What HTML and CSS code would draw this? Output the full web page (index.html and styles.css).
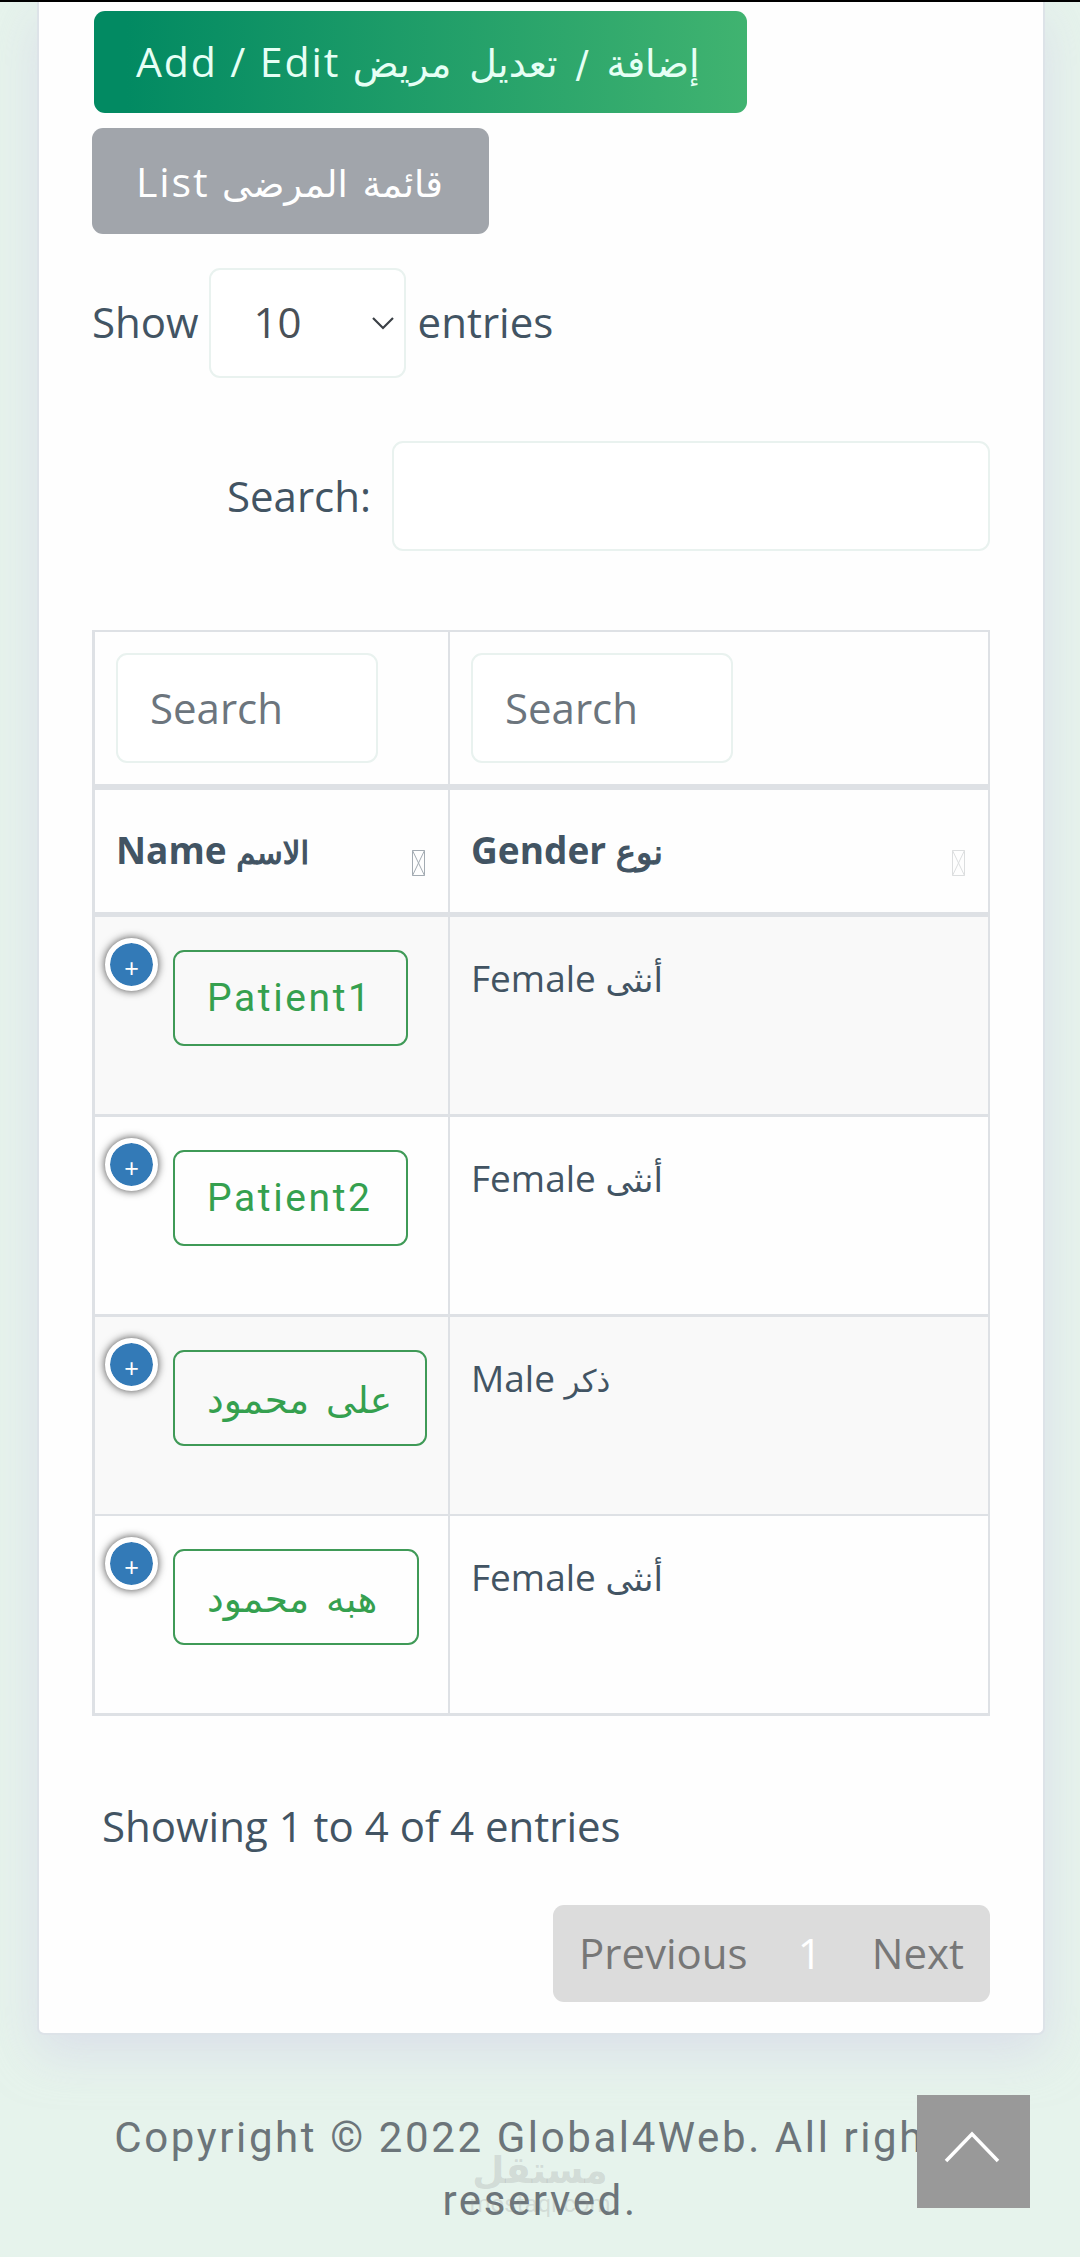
FILE: index.html
```html
<!DOCTYPE html>
<html lang="en">
<head>
    <meta charset="UTF-8">
    <meta name="viewport" content="width=device-width, initial-scale=1.0">
    <title>Patients - Global4Web</title>
    <link rel="stylesheet" href="styles.css">
</head>
<body>
    <div class="card">
        <div class="tabs">
            <button type="button" class="btn btn-primary">Add / Edit <span class="ar ar-add" dir="rtl">إضافة / تعديل مريض</span></button>
            <button type="button" class="btn btn-secondary">List <span class="ar ar-list" dir="rtl">قائمة المرضى</span></button>
        </div>

        <div class="table-length">
            <label for="length">Show</label>
            <div class="select-wrap">
                <select id="length" name="length">
                    <option>10</option>
                    <option>25</option>
                    <option>50</option>
                </select>
                <svg class="select-arrow" viewBox="0 0 24 14"><path d="M2 2l10 10L22 2"/></svg>
            </div>
            <span>entries</span>
        </div>

        <div class="table-filter">
            <label for="search">Search:</label>
            <input type="text" id="search" name="search">
        </div>

        <table class="patients">
            <colgroup>
                <col class="col-name">
                <col>
            </colgroup>
            <thead>
                <tr class="filters">
                    <th><input type="text" placeholder="Search"></th>
                    <th><input type="text" placeholder="Search"></th>
                </tr>
                <tr class="titles">
                    <th>
                        <div class="title">
                            <span>Name <span class="ar ar-name" dir="rtl">الاسم</span></span>
                            <svg class="sort sort-active" viewBox="0 0 13 26"><path d="M.5.5h12v25H.5zM.5.5l12 25M12.5.5l-12 25"/></svg>
                        </div>
                    </th>
                    <th>
                        <div class="title">
                            <span>Gender <span class="ar ar-gender" dir="rtl">نوع</span></span>
                            <svg class="sort" viewBox="0 0 13 26"><path d="M.5.5h12v25H.5zM.5.5l12 25M12.5.5l-12 25"/></svg>
                        </div>
                    </th>
                </tr>
            </thead>
            <tbody>
                <tr>
                    <td class="name"><div class="name-cell"><span class="expand">+</span><button type="button" class="btn-outline">Patient1</button></div></td>
                    <td class="gender">Female <span class="ar ar-female" dir="rtl">أنثى</span></td>
                </tr>
                <tr>
                    <td class="name"><div class="name-cell"><span class="expand">+</span><button type="button" class="btn-outline">Patient2</button></div></td>
                    <td class="gender">Female <span class="ar ar-female" dir="rtl">أنثى</span></td>
                </tr>
                <tr class="thin">
                    <td class="name"><div class="name-cell"><span class="expand">+</span><button type="button" class="btn-outline btn-ali"><span class="ar ar-patient" dir="rtl">على محمود</span></button></div></td>
                    <td class="gender">Male <span class="ar ar-male" dir="rtl">ذكر</span></td>
                </tr>
                <tr>
                    <td class="name"><div class="name-cell"><span class="expand">+</span><button type="button" class="btn-outline btn-heba"><span class="ar ar-patient" dir="rtl">هبه محمود</span></button></div></td>
                    <td class="gender">Female <span class="ar ar-female" dir="rtl">أنثى</span></td>
                </tr>
            </tbody>
        </table>

        <div class="table-info">Showing 1 to 4 of 4 entries</div>

        <div class="pagination">
            <a class="previous">Previous</a>
            <a class="current">1</a>
            <a class="next">Next</a>
        </div>
    </div>

    <footer class="footer">
        <p>Copyright © 2022 Global4Web. All rights reserved.</p>
        <div class="watermark">
            <span class="watermark-logo" dir="rtl">مستقل</span>
            <span class="watermark-url">mostaql.com</span>
        </div>
    </footer>

    <a class="back-to-top">
        <svg viewBox="0 0 56 32"><path d="M2 30L28 3l26 27"/></svg>
    </a>
</body>
</html>
```

FILE: styles.css
```css
*, *::before, *::after {
    box-sizing: border-box;
}

body {
    position: relative;
    margin: 0;
    height: 2257px;
    overflow: hidden;
    border-top: 2px solid #000;
    background-color: #e6f3ec;
    color: #425463;
    font-family: 'Open Sans', 'DejaVu Sans', sans-serif;
    font-size: 42px;
    line-height: 58px;
}

button, input, select {
    font: inherit;
    letter-spacing: inherit;
}

.ar {
    display: inline-block;
    font-family: 'DejaVu Sans', sans-serif;
    line-height: 1;
    white-space: nowrap;
}

.card {
    width: 1008px;
    height: 2033px;
    margin: 0 0 0 37px;
    padding: 9px 53px 0;
    background-color: #fefefe;
    border: 2px solid #dde3e8;
    border-top: 0;
    border-radius: 0 0 7px 7px;
    box-shadow: 0 18px 48px rgba(210, 208, 232, 0.55);
}

.tabs {
    display: flex;
    flex-direction: column;
    align-items: flex-start;
    gap: 15px;
}

.btn {
    border: 0;
    border-radius: 11px;
    color: #fff;
    font-size: 41px;
    letter-spacing: 1.9px;
    text-align: left;
    white-space: nowrap;
}

.btn-primary {
    width: 653px;
    height: 102px;
    margin-left: 2px;
    padding: 0 0 3px 42px;
    background: linear-gradient(90deg, #028a62 5%, #40b370);
    color: #e6fff5;
}

.btn-secondary {
    width: 397px;
    height: 106px;
    padding: 0 0 1px 44px;
    background-color: #a1a5ab;
}

.ar-add {
    font-size: 38px;
    word-spacing: 6px;
}

.ar-list {
    font-size: 37px;
    word-spacing: 3px;
}

.table-length {
    display: flex;
    align-items: center;
    margin-top: 34px;
}

.table-length label,
.table-length > span {
    padding-bottom: 2px;
}

.select-wrap {
    position: relative;
    margin: 0 12px 0 10px;
}

.select-wrap select {
    display: block;
    width: 197px;
    height: 110px;
    padding: 0 0 2px 43px;
    appearance: none;
    background-color: #fff;
    border: 2px solid #e9f2ef;
    border-radius: 11px;
    color: #495057;
}

.select-arrow {
    position: absolute;
    top: 48px;
    right: 11px;
    width: 24px;
    height: 14px;
    fill: none;
    stroke: #3b4046;
    stroke-width: 2.2;
}

.table-filter {
    display: flex;
    justify-content: flex-end;
    align-items: center;
    gap: 21px;
    margin-top: 63px;
}

input {
    height: 110px;
    background-color: #fff;
    border: 2px solid #e9f2ef;
    border-radius: 11px;
}

.table-filter input {
    width: 598px;
}

.patients {
    width: 898px;
    margin-top: 79px;
    table-layout: fixed;
    border-collapse: separate;
    border-spacing: 0;
    border: 0 solid #dee1e5;
    border-width: 2px 0 0 3px;
    font-size: 37px;
}

.col-name {
    width: 355px;
}

.patients th,
.patients td {
    padding: 0 21px;
    border: 0 solid #dee1e5;
    border-right-width: 2px;
    text-align: left;
    vertical-align: top;
}

.filters th {
    height: 158px;
    padding-top: 21px;
    border-bottom-width: 6px;
    font-weight: 400;
    line-height: 0;
}

.filters input {
    width: 262px;
    padding: 0 32px 2px;
    font-size: 42px;
    line-height: 58px;
}

.filters input::placeholder {
    color: #6c757d;
    opacity: 1;
}

.titles th {
    height: 127px;
    padding-top: 31px;
    border-bottom-width: 5px;
}

.title {
    display: flex;
    justify-content: space-between;
}

.sort {
    width: 13px;
    height: 26px;
    margin: 29px 2px 0 0;
    fill: none;
    stroke: #dcdedf;
}

.sort-active {
    stroke: #a3abb2;
}

.patients tbody td {
    height: 200px;
    border-bottom-width: 3px;
}

.patients tbody .thin td {
    height: 199px;
    border-bottom-width: 2px;
}

.patients tbody tr:nth-child(odd) {
    background-color: #f9f9f9;
}

.patients .name {
    padding: 21px 0 0 10px;
}

.patients .gender {
    padding-top: 32px;
}

.name-cell {
    display: flex;
    align-items: flex-start;
    gap: 15px;
}

.expand {
    flex: none;
    width: 53px;
    height: 53px;
    border: 5px solid #fff;
    border-radius: 50%;
    box-shadow: 0 0 8px #444;
    background-color: #337ab7;
    background-clip: padding-box;
    color: #fff;
    font-family: 'Liberation Sans', sans-serif;
    font-size: 25px;
    line-height: 50px;
    text-align: center;
}

.btn-outline {
    width: 235px;
    height: 96px;
    margin-top: 12px;
    padding: 0 0 0 32px;
    background: none;
    border: 2px solid #3f9a57;
    border-radius: 11px;
    color: #35a04f;
    font-family: Roboto, sans-serif;
    font-size: 39px;
    letter-spacing: 2.6px;
    text-align: left;
    white-space: nowrap;
}

.btn-ali {
    width: 254px;
    padding-top: 3px;
}

.btn-heba {
    width: 246px;
    padding-top: 3px;
}

.ar-patient {
    font-size: 37.5px;
    word-spacing: 5px;
}

.ar-name, .ar-gender {
    font-weight: 400;
    -webkit-text-stroke: 1.2px #425463;
}

.ar-name {
    font-size: 31px;
}

.ar-gender {
    font-size: 34px;
}

.ar-female {
    font-size: 34px;
}

.ar-male {
    font-size: 31px;
}

.table-info {
    margin-top: 81px;
    padding-left: 10px;
}

.pagination {
    display: flex;
    align-items: center;
    width: 437px;
    height: 97px;
    margin: 50px 0 0 auto;
    padding: 0 26px 2px;
    justify-content: space-between;
    background-color: #dcdcdc;
    border-radius: 11px;
    color: #777;
}

.pagination .current {
    color: #fff;
}

.footer {
    position: relative;
    padding-top: 71px;
    color: #6c757a;
    font-family: Roboto, sans-serif;
    font-size: 42px;
    line-height: 63px;
    letter-spacing: 2.6px;
    text-align: center;
}

.footer p {
    width: 860px;
    margin: 0 auto;
}

.watermark {
    position: absolute;
    top: 115px;
    left: 475px;
    display: flex;
    flex-direction: column;
    align-items: center;
    width: 130px;
    color: rgba(140, 140, 140, 0.24);
    letter-spacing: 0;
}

.watermark-logo {
    font-family: 'DejaVu Sans', sans-serif;
    font-size: 37px;
    font-weight: 700;
    line-height: 42px;
}

.watermark-url {
    font-family: Roboto, sans-serif;
    font-size: 24px;
    line-height: 24px;
}

.back-to-top {
    position: absolute;
    top: 2093px;
    left: 917px;
    display: flex;
    justify-content: center;
    align-items: center;
    width: 113px;
    height: 113px;
    padding: 0 3px 10px 0;
    background-color: #999;
}

.back-to-top svg {
    width: 56px;
    height: 32px;
    fill: none;
    stroke: #fff;
    stroke-width: 3.5;
}
```
